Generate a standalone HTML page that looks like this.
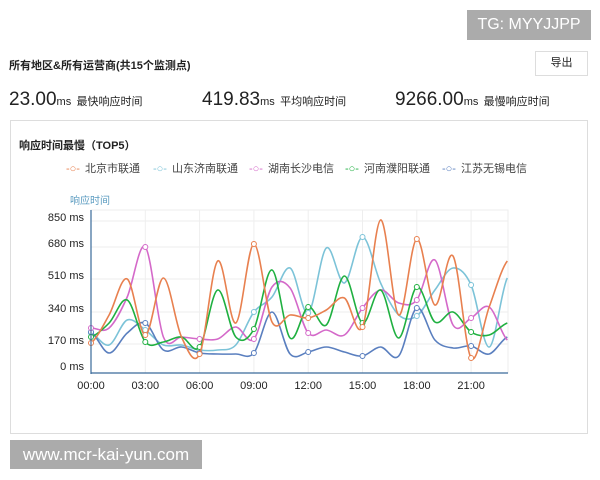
<!DOCTYPE html>
<html><head><meta charset="utf-8"><style>
body{margin:0;width:600px;height:480px;background:#fff;position:relative;font-family:"Liberation Sans","Noto Sans CJK SC",sans-serif;overflow:hidden;color:#222}
.a{position:absolute;white-space:nowrap}
.lg{position:absolute;top:160px;font-size:11px;color:#444}
.lg b{font-weight:normal;margin-right:5px}
</style></head><body>
<div class="a" style="left:467px;top:10px;width:124px;height:30px;background:#ababab;color:#fff;font-size:16px;line-height:30px;text-align:center">TG: MYYJJPP</div>
<div class="a" style="left:9px;top:57px;font-size:11px;font-weight:bold">所有地区&amp;所有运营商(共15个监测点)</div>
<div class="a" style="left:535px;top:51px;width:53px;height:25px;border:1px solid #ddd;box-sizing:border-box;font-size:11px;line-height:23px;text-align:center">导出</div>
<div class="a" style="left:9px;top:89px;font-size:19px">23.00<span style="font-size:11px">ms</span> <span style="font-size:11px">最快响应时间</span></div>
<div class="a" style="left:202px;top:89px;font-size:19px">419.83<span style="font-size:11px">ms</span> <span style="font-size:11px">平均响应时间</span></div>
<div class="a" style="left:395px;top:89px;font-size:19px">9266.00<span style="font-size:11px">ms</span> <span style="font-size:11px">最慢响应时间</span></div>
<div class="a" style="left:10px;top:120px;width:578px;height:314px;border:1px solid #ddd;box-sizing:border-box"></div>
<div class="a" style="left:19px;top:137px;font-size:11px;font-weight:bold">响应时间最慢（TOP5）</div>
<div class="lg" style="left:66px"><b style="color:#e8804f">-○-</b>北京市联通</div>
<div class="lg" style="left:153px"><b style="color:#7cc3d8">-○-</b>山东济南联通</div>
<div class="lg" style="left:249px"><b style="color:#d469c9">-○-</b>湖南长沙电信</div>
<div class="lg" style="left:345px"><b style="color:#1fb040">-○-</b>河南濮阳联通</div>
<div class="lg" style="left:442px"><b style="color:#5a7fbf">-○-</b>江苏无锡电信</div>
<div class="a" style="left:70px;top:192px;font-size:10px;color:#5a9bc0">响应时间</div>
<svg class="a" style="left:0;top:0" width="600" height="480" id="s" font-family="Liberation Sans,sans-serif" font-size="11" fill="#222"></svg>
<div class="a" style="left:10px;top:440px;width:192px;height:29px;background:#ababab;color:#fff;font-size:17px;line-height:29px;text-align:center">www.mcr-kai-yun.com</div>
<script>
var s=document.getElementById('s'),h='',W=18.1;
var X=function(i){return 91+i*W};
h+='<rect x="91" y="210" width="417" height="163" fill="none" stroke="#eee"/>';
[221,247,279,312,344].forEach(function(y){h+='<line x1="91" x2="508" y1="'+y+'" y2="'+y+'" stroke="#eee"/>'});
var lb=[['850 ms',221],['680 ms',247],['510 ms',279],['340 ms',312],['170 ms',344],['0 ms',370]];
lb.forEach(function(l){h+='<text x="84" y="'+l[1]+'" text-anchor="end">'+l[0]+'</text>'});
for(var i=0;i<8;i++){var x=X(i*3);h+='<line x1="'+x+'" x2="'+x+'" y1="210" y2="373" stroke="#eee"/><text x="'+x+'" y="389" text-anchor="middle">'+('0'+i*3).slice(-2)+':00</text>';}
var D=[
['#7cc3d8',[333,345,320,330,345,345,350,350,345,312,297,268,313,248,283,237,283,315,316,290,268,285,347,278]],
['#5a7fbf',[332,353,333,323,350,347,353,354,354,353,312,354,352,347,352,356,347,356,308,340,348,346,354,337]],
['#d469c9',[328,328,297,247,337,337,339,339,327,339,287,288,333,330,335,308,290,303,300,260,325,318,307,340]],
['#1fb040',[337,323,300,342,342,337,347,290,337,329,270,338,307,325,276,323,290,338,287,322,312,332,335,323]],
['#e8804f',[343,315,279,335,278,337,354,261,323,244,322,315,318,310,298,327,220,315,239,305,256,358,307,261]]];
D.forEach(function(d){var p=d[1],c=d[0],path='M'+X(0)+','+p[0];
for(var i=0;i<23;i++){var p0=p[Math.max(i-1,0)],p3=p[Math.min(i+2,23)];
var x1=X(i),x2=X(i+1);
path+=' C'+(x1+W/3)+','+(p[i]+(p[i+1]-p0)/6)+' '+(x2-W/3)+','+(p[i+1]-(p3-p[i])/6)+' '+x2+','+p[i+1];}
h+='<path d="'+path+'" fill="none" stroke="'+c+'" stroke-width="1.6"/>';
for(var i=0;i<24;i+=3)h+='<circle cx="'+X(i)+'" cy="'+p[i]+'" r="2.5" fill="#fff" stroke="'+c+'"/>';});
h+='<line x1="91" x2="91" y1="210" y2="374" stroke="#3a6a9a" stroke-width="1.2"/><line x1="91" x2="508" y1="373" y2="373" stroke="#3a6a9a" stroke-width="1.2"/>';
s.innerHTML=h;
</script>
</body></html>
